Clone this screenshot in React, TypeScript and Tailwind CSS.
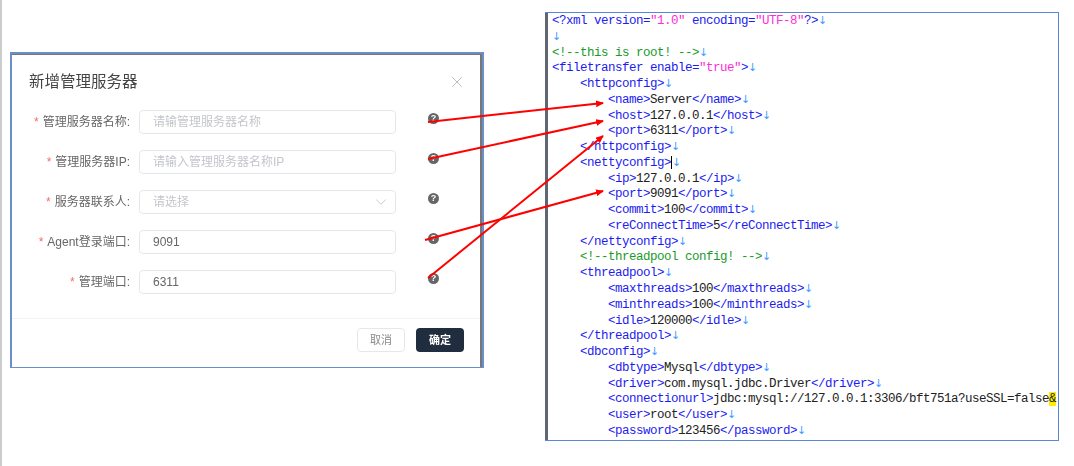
import { ChevronDown, X } from 'lucide-react';

const CJK = "font-['Liberation_Sans','Noto_Sans_CJK_SC',sans-serif]";

const FIELDS = [
  { label: '管理服务器名称:', placeholder: '请输管理服务器名称' },
  { label: '管理服务器IP:', placeholder: '请输入管理服务器名称IP' },
  { label: '服务器联系人:', placeholder: '请选择', select: true },
  { label: 'Agent登录端口:', value: '9091' },
  { label: '管理端口:', value: '6311' },
];

// x1, y1, x2, y2 of the red arrows, tip last
const ARROWS = [
  [428, 122, 603, 103],
  [428, 159, 603, 121],
  [425, 240, 603, 191],
  [428, 278, 603, 136],
];

const XML_LINES = [
  '<?xml version="1.0" encoding="UTF-8"?>',
  '',
  '<!--this is root! -->',
  '<filetransfer enable="true">',
  '    <httpconfig>',
  '        <name>Server</name>',
  '        <host>127.0.0.1</host>',
  '        <port>6311</port>',
  '    </httpconfig>',
  '    <nettyconfig>',
  '        <ip>127.0.0.1</ip>',
  '        <port>9091</port>',
  '        <commit>100</commit>',
  '        <reConnectTime>5</reConnectTime>',
  '    </nettyconfig>',
  '    <!--threadpool config! -->',
  '    <threadpool>',
  '        <maxthreads>100</maxthreads>',
  '        <minthreads>100</minthreads>',
  '        <idle>120000</idle>',
  '    </threadpool>',
  '    <dbconfig>',
  '        <dbtype>Mysql</dbtype>',
  '        <driver>com.mysql.jdbc.Driver</driver>',
  '        <connectionurl>jdbc:mysql://127.0.0.1:3306/bft751a?useSSL=false&',
  '        <user>root</user>',
  '        <password>123456</password>',
];

function Tag({ text }: { text: string }) {
  // split attribute values out so they can be magenta
  const parts = text.split(/("[^"]*")/);
  return (
    <span className="text-[#1c1cf0]">
      {parts.map((p, i) =>
        p.startsWith('"') ? (
          <span key={i} className="text-[#ff2bd6]">
            {p}
          </span>
        ) : (
          <span key={i}>{p}</span>
        ),
      )}
    </span>
  );
}

function XmlLine({ line }: { line: string }) {
  const isComment = line.trim().startsWith('<!--');
  const hasAmp = line.endsWith('&');
  const body = hasAmp ? line.slice(0, -1) : line;

  return (
    <div className="h-[15.77px] leading-[15.77px] whitespace-pre">
      {isComment ? (
        <span className="text-[#1a9a2a]">{body}</span>
      ) : (
        body.split(/(<[^>]+>)/).map((part, i) =>
          part.startsWith('<') ? (
            <Tag key={i} text={part} />
          ) : (
            <span key={i} className="text-[#222]">
              {part}
            </span>
          ),
        )
      )}
      {line.trim() === '<nettyconfig>' && (
        <span className="inline-block w-0 h-[13px] align-middle border-l border-black" />
      )}
      {hasAmp ? (
        <span className="bg-[#ffee00] text-[#222]">&amp;</span>
      ) : (
        <span className="text-[#3f9bff] font-['DejaVu_Sans',sans-serif] text-[11px] leading-[0] tracking-normal">↓</span>
      )}
    </div>
  );
}

function Field({ label, placeholder, value, select }: (typeof FIELDS)[number]) {
  return (
    <div className="flex items-start h-6">
      <label className="w-[118px] h-6 leading-6 text-right text-xs text-[#666]">
        <span className="text-[#f56c6c] mr-1">*</span>
        {label}
      </label>
      <div className="ml-[9px] w-[257px] h-6 flex items-center justify-between pl-[13px] pr-[5px] rounded-sm border border-[#e6e7ec] text-xs">
        <span className={value ? 'text-[#666]' : 'text-[#c4c6cc]'}>{value ?? placeholder}</span>
        {select && <ChevronDown size={18} strokeWidth={1} className="text-[#b8bac0]" />}
      </div>
      <span className="ml-[32px] mt-[3px] w-[11px] h-[11px] rounded-full bg-[#666] text-white text-[9px] leading-[11px] font-bold text-center">
        ?
      </span>
    </div>
  );
}

export default function App() {
  return (
    <div className={`relative flex items-start w-[1074px] h-[466px] bg-white border-l-2 border-[#cccccc] overflow-hidden ${CJK}`}>
      {/* screenshot of the dialog */}
      <div className="ml-2 mt-[52px] w-[474px] h-[316px] border-2 border-b border-[#6b8ecb]">
        <div className="h-full flex flex-col border-t border-r-2 border-[#777777] blur-[0.3px]">
          <div className="flex items-center justify-between h-[53px] pl-[17px] pr-[14px]">
            <h2 className="text-[15.5px] font-normal text-[#444]">新增管理服务器</h2>
            <X size={18} strokeWidth={1} className="text-[#aaaaaa]" />
          </div>
          <div className="flex flex-col gap-4 pt-[2px]">
            {FIELDS.map((f) => (
              <Field key={f.label} {...f} />
            ))}
          </div>
          <div className="mt-[24px] flex-1 flex justify-end items-start gap-[11px] pt-[9px] pr-[16px] border-t border-[#f2f2f4]">
            <button className="w-[48px] h-6 rounded-sm border border-[#e6e7ec] text-[11px] text-[#888]">取消</button>
            <button className="w-[48px] h-6 rounded-sm bg-[#1f2d3f] text-[11px] font-bold text-white">确定</button>
          </div>
        </div>
      </div>

      {/* xml editor screenshot */}
      <div className="ml-[61px] mt-3 w-[514px] h-[429px] border border-l-0 border-[#5b86d6] overflow-hidden">
        <div className="h-full pl-1 pt-px border-l-[3px] border-l-[#5f6672] font-['Liberation_Mono',monospace] text-[12.5px] tracking-[-0.5px] overflow-hidden">
          {XML_LINES.map((line, i) => (
            <XmlLine key={i} line={line} />
          ))}
        </div>
      </div>

      {/* red arrows lie over both screenshots */}
      <svg className="absolute left-[-2px] top-0 pointer-events-none" width="1074" height="466">
        <defs>
          <marker id="head" viewBox="0 0 8 7" refX="7" refY="3.5" markerWidth="8" markerHeight="7" markerUnits="userSpaceOnUse" orient="auto">
            <path d="M0 0 8 3.5 0 7z" fill="#ff0000" />
          </marker>
        </defs>
        {ARROWS.map(([x1, y1, x2, y2]) => (
          <line key={y1} x1={x1} y1={y1} x2={x2} y2={y2} stroke="#ff0000" strokeWidth="2" markerEnd="url(#head)" />
        ))}
      </svg>
    </div>
  );
}
